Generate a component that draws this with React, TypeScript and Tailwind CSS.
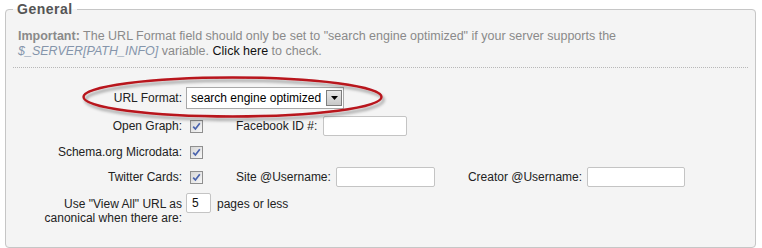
import React from "react";

function Check() {
  return (
    <span className="ml-[4px] inline-flex h-[13px] w-[13px] items-center justify-center border border-[#8f8f8f] bg-gradient-to-br from-[#d6d6d6] to-[#f7f7f7]">
      <svg width="9" height="9" viewBox="0 0 9 9">
        <path d="M1.2 4.6 L3.4 7 L7.8 1.2" fill="none" stroke="#4a63ad" strokeWidth="1.7" />
      </svg>
    </span>
  );
}

function TextInput({ w, value }: { w: string; value?: string }) {
  return (
    <span
      className={`${w} inline-flex h-[20px] items-center rounded-[2px] border border-[#c4c4c4] bg-white pl-[5px] text-[#111]`}
    >
      {value}
    </span>
  );
}

export default function App() {
  return (
    <div
      className="relative h-[248px] w-[762px] bg-white text-[12px] text-[#222]"
      style={{ fontFamily: '"Liberation Sans", Arial, sans-serif' }}
    >
      <fieldset className="ml-[5px] mr-[6px] rounded-[4px] border border-[#c6c6c6] bg-[#f4f4f4] pb-[22px] pl-[7px] pr-[7px]">
        <legend className="px-[4px] text-[14px] font-bold leading-[18px] tracking-[0.5px] text-[#555]">
          General
        </legend>
        <p className="ml-[5px] mt-[11px] text-[12.5px] leading-[15px] text-[#8a8a8a]">
          <b>Important:</b> The URL Format field should only be set to "search engine optimized" if your
          server supports the
          <br />
          <i className="text-[#8595ab]">$_SERVER[PATH_INFO]</i> variable.{" "}
          <span className="text-[#111]">Click here</span> to check.
        </p>
        <div className="mt-[8px] border-t border-dotted border-[#b8b8b8]" />

        <div className="mt-[19px] flex h-[22px] items-center">
          <span className="w-[169px] text-right">URL Format:</span>
          <span className="ml-[4px] flex h-[22px] w-[158px] items-center justify-between border border-[#a8a8a8] bg-white pl-[4px] pr-[1px] text-[#000]">
            search engine optimized
            <span className="flex h-[16px] w-[16px] items-center justify-center border border-[#7e7e7e] bg-gradient-to-b from-[#e8e8e8] to-[#c8c8c8]">
              <svg width="7" height="4" viewBox="0 0 7 4">
                <path d="M0 0 H7 L3.5 4 Z" fill="#000" />
              </svg>
            </span>
          </span>
        </div>

        <div className="mt-[7px] flex h-[20px] items-center">
          <span className="w-[169px] text-right">Open Graph:</span>
          <span className="ml-[4px] flex w-[50px] items-center">
            <Check />
          </span>
          <span className="mr-[6px]">Facebook ID #:</span>
          <TextInput w="w-[84px]" />
        </div>

        <div className="mt-[6px] flex h-[20px] items-center">
          <span className="w-[169px] text-right">Schema.org Microdata:</span>
          <span className="ml-[4px] flex w-[50px] items-center">
            <Check />
          </span>
        </div>

        <div className="mt-[5px] flex h-[20px] items-center">
          <span className="w-[169px] text-right">Twitter Cards:</span>
          <span className="ml-[4px] flex w-[50px] items-center">
            <Check />
          </span>
          <span className="mr-[5px]">Site @Username:</span>
          <TextInput w="w-[99px]" />
          <span className="ml-[33px] mr-[5px]">Creator @Username:</span>
          <TextInput w="w-[98px]" />
        </div>

        <div className="mt-[6px] flex items-start">
          <span className="mt-[4px] w-[169px] text-right leading-[14px]">
            Use "View All" URL as
            <br />
            canonical when there are:
          </span>
          <span className="ml-[4px]">
            <TextInput w="w-[25px]" value="5" />
          </span>
          <span className="ml-[6px] mt-[4px] leading-[14px]">pages or less</span>
        </div>
      </fieldset>

      <svg
        className="pointer-events-none absolute left-[78px] top-[72px]"
        width="320"
        height="56"
        viewBox="0 0 320 56"
      >
        <defs>
          <filter id="sh" x="-10%" y="-30%" width="120%" height="170%">
            <feDropShadow dx="2" dy="3" stdDeviation="1.4" floodColor="#000" floodOpacity="0.35" />
          </filter>
        </defs>
        <ellipse
          cx="154.5"
          cy="25"
          rx="149"
          ry="19.5"
          fill="none"
          stroke="#b8141c"
          strokeWidth="2.4"
          filter="url(#sh)"
        />
      </svg>
    </div>
  );
}
